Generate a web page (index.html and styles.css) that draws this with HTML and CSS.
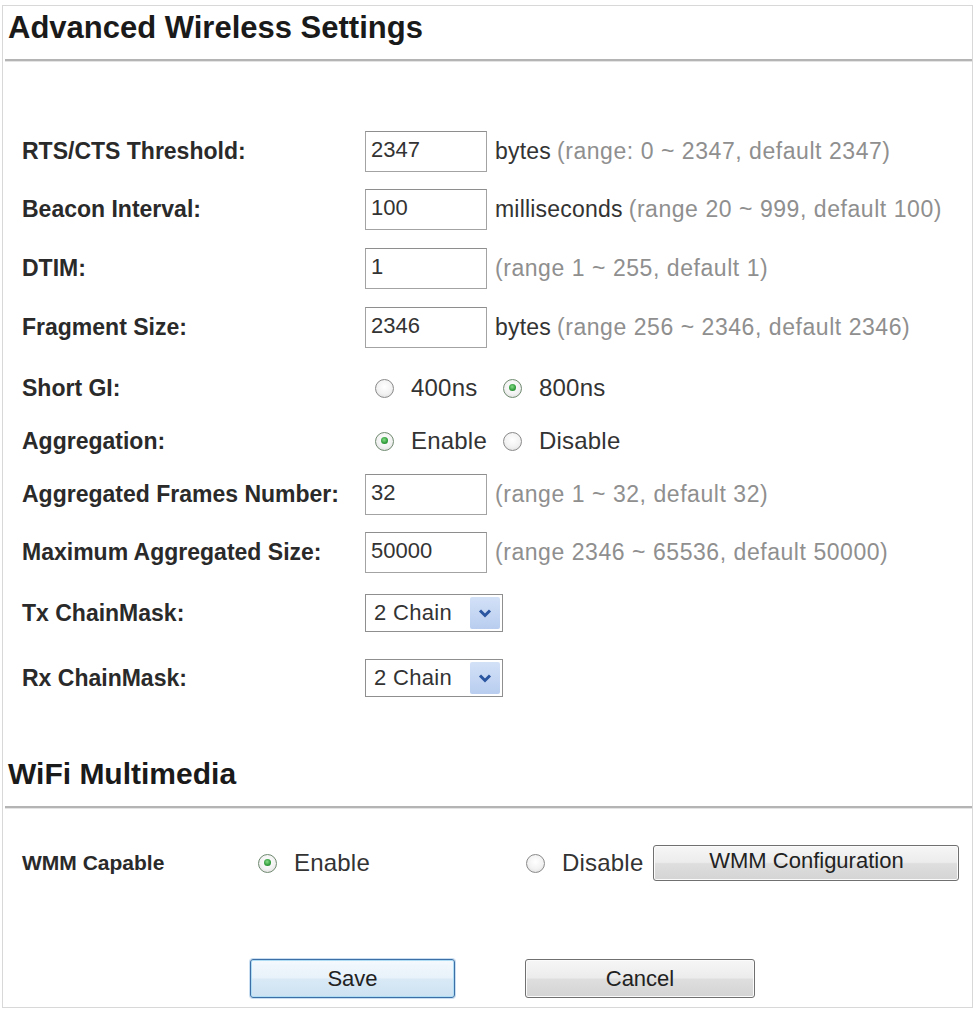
FILE: index.html
```html
<!DOCTYPE html>
<html>
<head>
<meta charset="utf-8">
<title>Advanced Wireless Settings</title>
<link rel="stylesheet" href="styles.css">
</head>
<body>
<div class="frame">
  <div class="section-head">
    <h1 class="title">Advanced Wireless Settings</h1>
  </div>

  <div class="form">
    <div class="row r1">
      <div class="label">RTS/CTS Threshold:</div>
      <div class="ctrl"><input class="field" type="text" value="2347"><span class="unit">bytes</span> <span class="hint">(range: 0 ~ 2347, default 2347)</span></div>
    </div>
    <div class="row r2">
      <div class="label">Beacon Interval:</div>
      <div class="ctrl"><input class="field" type="text" value="100"><span class="unit">milliseconds</span> <span class="hint">(range 20 ~ 999, default 100)</span></div>
    </div>
    <div class="row r3">
      <div class="label">DTIM:</div>
      <div class="ctrl"><input class="field" type="text" value="1"><span class="hint">(range 1 ~ 255, default 1)</span></div>
    </div>
    <div class="row r4">
      <div class="label">Fragment Size:</div>
      <div class="ctrl"><input class="field" type="text" value="2346"><span class="unit">bytes</span> <span class="hint">(range 256 ~ 2346, default 2346)</span></div>
    </div>
    <div class="row r5">
      <div class="label">Short GI:</div>
      <div class="ctrl radios">
        <span class="opt"><span class="radio"></span><span class="opt-text">400ns</span></span>
        <span class="opt"><span class="radio on"></span><span class="opt-text">800ns</span></span>
      </div>
    </div>
    <div class="row r6">
      <div class="label">Aggregation:</div>
      <div class="ctrl radios">
        <span class="opt"><span class="radio on"></span><span class="opt-text">Enable</span></span>
        <span class="opt"><span class="radio"></span><span class="opt-text">Disable</span></span>
      </div>
    </div>
    <div class="row r7">
      <div class="label">Aggregated Frames Number:</div>
      <div class="ctrl"><input class="field" type="text" value="32"><span class="hint">(range 1 ~ 32, default 32)</span></div>
    </div>
    <div class="row r8">
      <div class="label">Maximum Aggregated Size:</div>
      <div class="ctrl"><input class="field" type="text" value="50000"><span class="hint">(range 2346 ~ 65536, default 50000)</span></div>
    </div>
    <div class="row r9">
      <div class="label">Tx ChainMask:</div>
      <div class="ctrl">
        <div class="select"><span class="select-text">2 Chain</span><span class="select-btn"><svg width="16" height="12" viewBox="0 0 16 12"><path d="M3 3.5 L8 8.5 L13 3.5" fill="none" stroke="#2a55a0" stroke-width="3"/></svg></span></div>
      </div>
    </div>
    <div class="row r10">
      <div class="label">Rx ChainMask:</div>
      <div class="ctrl">
        <div class="select"><span class="select-text">2 Chain</span><span class="select-btn"><svg width="16" height="12" viewBox="0 0 16 12"><path d="M3 3.5 L8 8.5 L13 3.5" fill="none" stroke="#2a55a0" stroke-width="3"/></svg></span></div>
      </div>
    </div>
  </div>

  <div class="section-head wmm-head">
    <h2 class="title">WiFi Multimedia</h2>
  </div>

  <div class="wmm-row">
    <div class="wmm-label">WMM Capable</div>
    <span class="opt wmm-enable"><span class="radio on"></span><span class="opt-text">Enable</span></span>
    <span class="opt wmm-disable"><span class="radio"></span><span class="opt-text">Disable</span></span>
    <button class="btn wmm-btn" type="button">WMM Configuration</button>
  </div>

  <div class="actions">
    <button class="btn save" type="button">Save</button>
    <button class="btn cancel" type="button">Cancel</button>
  </div>
</div>
</body>
</html>
```

FILE: styles.css
```css
html, body {
  margin: 0;
  padding: 0;
  background: #ffffff;
}

body {
  font-family: "Liberation Sans", Arial, sans-serif;
  color: #1e1e1e;
}

.frame {
  margin: 5px 0 0 2px;
  width: 971px;
  height: 1003px;
  border: 1px solid #d8d8d8;
  box-sizing: border-box;
}

.section-head {
  margin-left: 2px;
  border-bottom: 2px solid #b4b4b4;
  box-shadow: 0 1px 0 #e4e4e4;
}

.section-head:first-child {
  height: 53px;
}

.title {
  margin: 0;
  padding: 0 0 0 3px;
  font-size: 31px;
  font-weight: bold;
  line-height: 34px;
  color: #1a1a1a;
  letter-spacing: 0;
}

.wmm-head .title {
  font-size: 30px;
}

.section-head:first-child .title {
  padding-top: 5px;
}

.form {
  padding: 61px 0 0 19px;
  display: grid;
  grid-template-columns: 343px 1fr;
}

.row {
  display: contents;
}

.label, .ctrl {
  display: flex;
  align-items: center;
}

.label {
  font-size: 23px;
  font-weight: bold;
  color: #2a2a2a;
}

.r1 > * { height: 58px; }
.r2 > * { height: 58px; }
.r3 > * { height: 60px; }
.r4 > * { height: 58px; }
.r5 > * { height: 64px; }
.r6 > * { height: 42px; }
.r7 > * { height: 64px; }
.r8 > * { height: 52px; }
.r9 > * { height: 70px; }
.r10 > * { height: 60px; }

.field {
  width: 122px;
  height: 41px;
  box-sizing: border-box;
  margin: 0 8px 0 0;
  padding: 0 0 2px 5px;
  border: 1px solid #a3a3a3;
  border-top-color: #8e8e8e;
  font-family: "Liberation Sans", Arial, sans-serif;
  font-size: 22px;
  color: #333;
  background: #fff;
  outline: none;
}

.unit {
  font-size: 23px;
  color: #333;
  letter-spacing: 0.2px;
}

.hint {
  font-size: 23px;
  color: #8f8f8f;
  letter-spacing: 0.55px;
  margin-left: 6px;
}

.ctrl > .field + .hint {
  margin-left: 0;
}

.opt {
  display: inline-flex;
  align-items: center;
  font-size: 24px;
  color: #333;
}

.opt-text {
  margin-left: 17px;
  letter-spacing: 0.2px;
}

.radios .opt:first-child {
  margin-left: 10px;
  width: 128px;
}

.radio {
  display: inline-block;
  width: 19px;
  height: 19px;
  border-radius: 50%;
  border: 1.5px solid #8a8a8a;
  background: radial-gradient(circle at 50% 40%, #ffffff 0, #f2f2f2 55%, #d6d6d6 100%);
  box-sizing: border-box;
  position: relative;
}

.radio.on {
  border-color: #708a70;
}

.radio.on::after {
  content: "";
  position: absolute;
  left: 4.5px;
  top: 4.5px;
  width: 7px;
  height: 7px;
  border-radius: 50%;
  background: radial-gradient(circle at 45% 40%, #86dc86 0, #2f9b3a 60%, #1f6f28 100%);
}

.select {
  display: flex;
  align-items: center;
  width: 138px;
  height: 38px;
  box-sizing: border-box;
  border: 1px solid #8f8f8f;
  background: #fff;
  padding: 2px;
}

.select-text {
  flex: 1;
  font-size: 22px;
  color: #333;
  padding-left: 6px;
  letter-spacing: 0.3px;
}

.select-btn {
  width: 30px;
  height: 32px;
  border-radius: 2px;
  background: linear-gradient(#d3e1f7, #b8cdef);
  display: flex;
  align-items: center;
  justify-content: center;
}

.wmm-head {
  padding-top: 49px;
  padding-bottom: 15px;
}

.wmm-row {
  display: flex;
  align-items: center;
  padding: 36px 0 0 19px;
  height: 38px;
}

.wmm-label {
  width: 236px;
  font-size: 21px;
  font-weight: bold;
  color: #2a2a2a;
}

.wmm-enable {
  width: 268px;
}

.btn {
  font-family: "Liberation Sans", Arial, sans-serif;
  font-size: 22px;
  color: #222;
  border: 1px solid #707070;
  border-radius: 3px;
  background: linear-gradient(#f6f6f6 0, #ececec 48%, #dedede 52%, #d4d4d4 100%);
  box-shadow: inset 0 0 0 1px #fbfbfb;
  padding: 0;
  cursor: default;
}

.wmm-btn {
  margin-left: 10px;
  width: 306px;
  height: 36px;
  padding-bottom: 4px;
}

.actions {
  display: flex;
  gap: 70px;
  padding: 77px 0 0 247px;
}

.save {
  width: 205px;
  height: 39px;
  border-color: #3c6fa5;
  box-shadow: inset 0 0 0 1px #aedcf5, 0 0 0 1px #c9def0;
  background: linear-gradient(#f4f9fd 0, #e8f2fa 48%, #d9e9f6 52%, #cde2f2 100%);
}

.cancel {
  width: 230px;
  height: 39px;
}
```
